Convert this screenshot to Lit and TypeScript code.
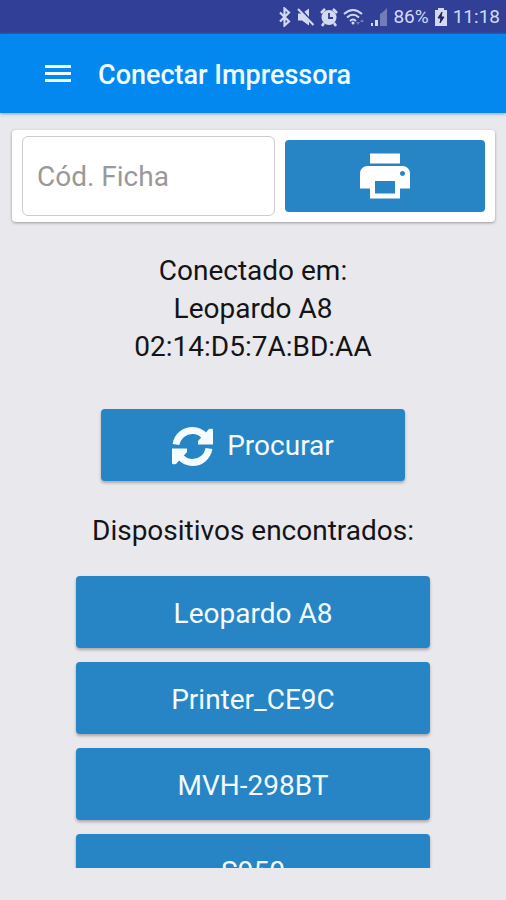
import { LitElement, html, css } from "lit";
import { customElement, state } from "lit/decorators.js";

@customElement("app-root")
export class AppRoot extends LitElement {
  @state() private devices = ["Leopardo A8", "Printer_CE9C", "MVH-298BT", "S950"];

  static styles = css`
    :host {
      display: flex;
      flex-direction: column;
      height: 100vh;
      overflow: hidden;
      background: #e9e8ed;
      color: #141416;
      font-family: Roboto, sans-serif;
      font-size: 28px;
      line-height: 38px;
    }
    * {
      box-sizing: border-box;
    }
    h1, h2, p, ul {
      margin: 0;
      padding: 0;
      font-weight: 400;
      font-size: inherit;
    }
    button, input {
      font: inherit;
    }
    .status {
      flex: none;
      display: flex;
      align-items: center;
      justify-content: flex-end;
      gap: 5px;
      height: 34px;
      padding-right: 6px;
      background: #313f96;
      color: #d3d9f3;
      font-size: 19px;
      line-height: 34px;
    }
    .status svg, .menu svg, .print svg, .search svg {
      display: block;
      fill: currentColor;
    }
    .bar {
      flex: none;
      display: flex;
      align-items: center;
      gap: 20px;
      height: 79px;
      padding: 2px 38px 0;
      background: #0288ee;
      color: #f2fbff;
      box-shadow: 0 1px 3px #7fa9cc;
    }
    .menu {
      padding: 0;
      border: 0;
      background: none;
      color: inherit;
    }
    .title {
      font-size: 27px;
      font-weight: 500;
    }
    .card {
      flex: none;
      display: grid;
      grid-template-columns: 253fr 200fr;
      align-items: center;
      gap: 10px;
      margin: 17px 11px 0 12px;
      padding: 6px 10px;
      border-radius: 4px;
      background: #fff;
      box-shadow: 0 1px 3px rgba(0, 0, 0, 0.35);
    }
    .code {
      width: 100%;
      min-width: 0;
      height: 80px;
      padding: 0 14px;
      border: 1px solid #cdcdcd;
      border-radius: 6px;
      background: #fff;
      color: #222;
    }
    .code::placeholder {
      color: #999;
      opacity: 1;
    }
    .btn {
      display: flex;
      align-items: center;
      justify-content: center;
      gap: 14px;
      width: 100%;
      height: 72px;
      padding: 4px 0 0;
      border: 0;
      border-radius: 4px;
      background: #2785c5;
      color: #f4fcff;
      box-shadow: 0 2px 3px rgba(60, 40, 60, 0.35);
    }
    .print {
      padding: 0;
      color: #fff;
      box-shadow: none;
    }
    .connected {
      flex: none;
      margin-top: 30px;
      text-align: center;
    }
    .search {
      flex: none;
      width: 60%;
      margin: 43px auto 0;
      padding: 2px 0 0;
    }
    .found {
      flex: none;
      margin-top: 31px;
      text-align: center;
    }
    .list {
      flex: 1;
      min-height: 0;
      display: flex;
      flex-direction: column;
      gap: 14px;
      margin: 22px 0 32px;
      padding: 4px 15% 0;
      overflow: hidden;
      list-style: none;
    }
  `;

  render() {
    return html`
      <div class="status">
        <svg width="14" height="20" viewBox="0 0 14 20"><path d="M2 5.500l9 9-4.500 4V1.500l4.500 4-9 9" fill="none" stroke="currentColor" stroke-width="2.200"/></svg>
        <svg width="18" height="20" viewBox="0 0 18 20"><path d="M1 6.500h4l7-5v17l-7-5H1z"/><path d="M2 1l15 17" stroke="#313f96" stroke-width="3"/><path d="M1 2l15.500 16" stroke="currentColor" stroke-width="2"/></svg>
        <svg width="18" height="20" viewBox="1 0 18 20"><circle cx="10" cy="10.500" r="7.500"/><path d="M2 6l4-4M18 6l-4-4M5 16l-2 3M15 16l2 3" stroke="currentColor" stroke-width="2.500"/><path d="M10 6v5h4" fill="none" stroke="#313f96" stroke-width="1.800"/></svg>
        <svg width="22" height="20" viewBox="0 0 22 20"><g fill="none" stroke="currentColor" stroke-width="2"><path d="M1 7q9-8 18 0M4 10.500q6-5.500 12 0M7 14q3-3 6 0"/></g><circle cx="10" cy="16" r="1.500"/><path d="M13 15h4l-2 3zM17 15l2-3 2 3z" opacity=".4"/></svg>
        <svg width="18" height="20" viewBox="0 0 18 20"><path d="M1 16h2v3H1zM5 13h3v6H5z"/><path d="M10 7l3-2v14h-3zM13 5l4-4v18h-4z" opacity=".4"/></svg>
        <span>86%</span>
        <svg width="14" height="20" viewBox="0 0 14 20"><path d="M4 1h6v2h3v16H1V3h3z"/><path d="M8 5l-4 6h3l-1 5 4-6H7z" fill="#20265c" stroke="#20265c"/></svg>
        <span>11:18</span>
      </div>
      <header class="bar">
        <button class="menu" aria-label="Menu">
          <svg width="40" height="40" viewBox="0 0 40 40"><path d="M7 10h26v3H7zM7 17h26v3H7zM7 24h26v3H7z"/></svg>
        </button>
        <h1 class="title">Conectar Impressora</h1>
      </header>
      <form class="card" @submit=${(e: Event) => e.preventDefault()}>
        <input class="code" type="text" placeholder="Cód. Ficha" aria-label="Cód. Ficha" />
        <button class="btn print" aria-label="Imprimir">
          <svg width="60" height="60" viewBox="0 0 24 24"><path d="M19 8H5c-1.660 0-3 1.340-3 3v6h4v4h12v-4h4v-6c0-1.660-1.340-3-3-3zm-3 11H8v-5h8v5zm3-7c-.55 0-1-.45-1-1s.45-1 1-1 1 .45 1 1-.45 1-1 1zm-1-9H6v4h12V3z"/></svg>
        </button>
      </form>
      <div class="connected">
        <p>Conectado em:</p>
        <p>Leopardo A8</p>
        <p>02:14:D5:7A:BD:AA</p>
      </div>
      <button class="btn search">
        <svg width="41" height="41" viewBox="0 0 41 41"><g fill="none" stroke="currentColor" stroke-width="7"><path d="M4 18.500C5.500 10 12.500 4.500 20.500 4.500c5 0 9 2 12 5.500"/><path d="M37 22.500C35.500 31 28.500 36.500 20.500 36.500c-5 0-9-2-12-5.500"/></g><path d="M37 3q4-1 4 1v14.500H26V15z"/><path d="M4 38q-4 1-4-1V22.500h15V26z"/></svg>
        <span>Procurar</span>
      </button>
      <h2 class="found">Dispositivos encontrados:</h2>
      <ul class="list">
        ${this.devices.map((d) => html`<li><button class="btn">${d}</button></li>`)}
      </ul>
    `;
  }
}
